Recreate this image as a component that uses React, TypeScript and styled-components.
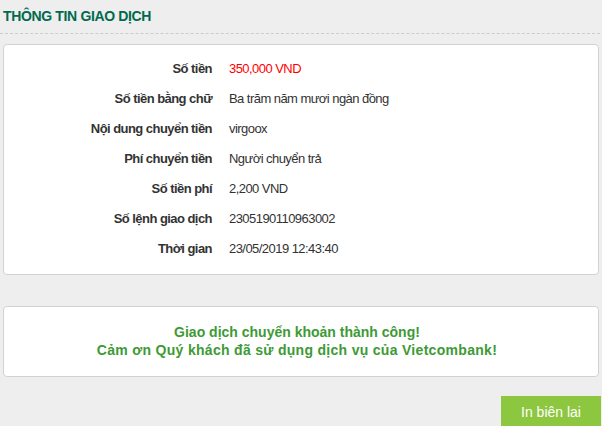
import * as React from 'react'
import styled, { createGlobalStyle } from 'styled-components'

interface IRow {
	label: string
	value: string
	highlight?: boolean
}

const rows: IRow[] = [
	{ label: 'Số tiền', value: '350,000 VND', highlight: true },
	{ label: 'Số tiền bằng chữ', value: 'Ba trăm năm mươi ngàn đồng' },
	{ label: 'Nội dung chuyển tiền', value: 'virgoox' },
	{ label: 'Phí chuyển tiền', value: 'Người chuyển trả' },
	{ label: 'Số tiền phí', value: '2,200 VND' },
	{ label: 'Số lệnh giao dịch', value: '2305190110963002' },
	{ label: 'Thời gian', value: '23/05/2019 12:43:40' },
]

const App: React.FC = () => {
	return (
		<Page>
			<GlobalStyle />
			<Header>
				<Title>THÔNG TIN GIAO DỊCH</Title>
			</Header>
			<Body>
				<DetailCard>
					{rows.map((row) => (
						<Row key={row.label}>
							<Label>{row.label}</Label>
							<Value highlight={row.highlight}>{row.value}</Value>
						</Row>
					))}
				</DetailCard>
				<MessageCard>
					<Message>Giao dịch chuyển khoản thành công!</Message>
					<Message wide>Cảm ơn Quý khách đã sử dụng dịch vụ của Vietcombank!</Message>
				</MessageCard>
				<Actions>
					<PrintButton>In biên lai</PrintButton>
				</Actions>
			</Body>
		</Page>
	)
}

export default App

const GlobalStyle = createGlobalStyle`
	html, body {
		margin: 0;
		padding: 0;
		background: #eeeeee;
		font-family: "Liberation Sans", Arial, sans-serif;
		overflow: hidden;
	}
`

const Page = styled.div`
	width: 602px;
	height: 426px;
	background: #eeeeee;
	color: #333333;
`

const Header = styled.div`
	padding: 8px 3px;
	margin-right: 2px;
	border-bottom: 1px dashed #cccccc;
`

const Title = styled.h2`
	margin: 0;
	font-size: 14px;
	line-height: 17px;
	font-weight: bold;
	letter-spacing: -0.35px;
	color: #006a4e;
`

const Body = styled.div`
	padding: 10px 3px 0 3px;
`

const Card = styled.div`
	background: #ffffff;
	border: 1px solid #d2d2d2;
	border-radius: 4px;
`

const DetailCard = styled(Card)`
	padding: 8px 0 11px;
`

const Row = styled.div`
	display: grid;
	grid-template-columns: 208px 1fr;
	column-gap: 17px;
	height: 30px;
	align-items: center;
	font-size: 13px;
	letter-spacing: -0.55px;
`

const Label = styled.div`
	text-align: right;
	font-weight: bold;
	color: #333333;
`

const Value = styled.div<{ highlight?: boolean }>`
	color: ${(props) => (props.highlight ? '#ff0000' : '#333333')};
`

const MessageCard = styled(Card)`
	margin-top: 31px;
	padding: 16px 8px 17px 0;
	text-align: center;
`

const Message = styled.div<{ wide?: boolean }>`
	font-size: 14px;
	line-height: 18px;
	font-weight: bold;
	letter-spacing: ${(props) => (props.wide ? '0.3px' : '0')};
	color: #3d9a35;
`

const Actions = styled.div`
	display: flex;
	justify-content: flex-end;
	margin-top: 19px;
	margin-right: -2px;
`

const PrintButton = styled.button`
	width: 100px;
	height: 32px;
	border: none;
	background: #8dc63f;
	color: #ffffff;
	font-family: "Liberation Sans", Arial, sans-serif;
	font-size: 14px;
	cursor: pointer;
`
